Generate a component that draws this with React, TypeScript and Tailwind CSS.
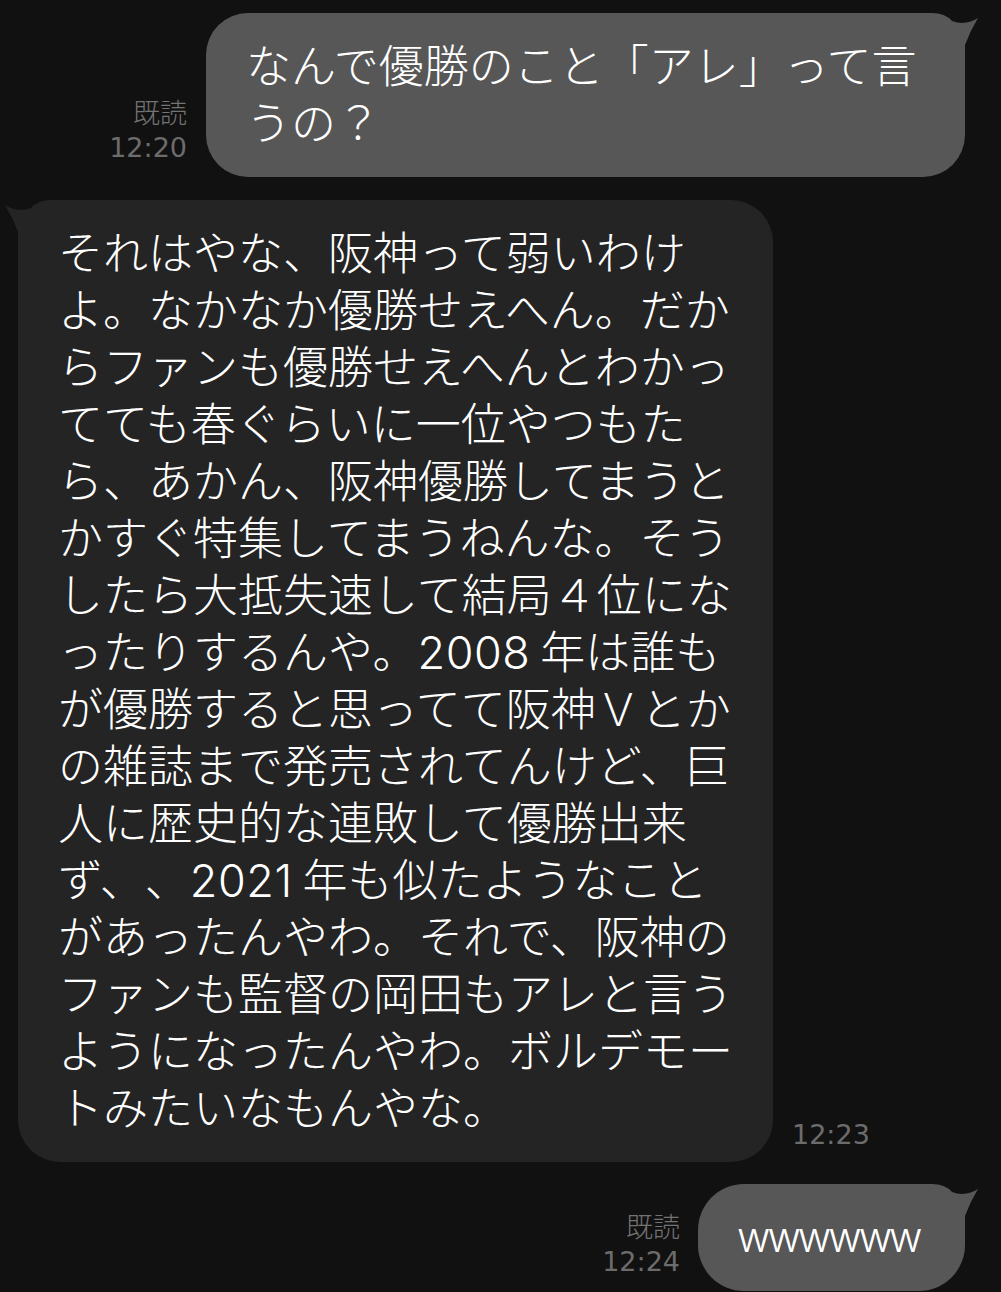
import React from "react";

const bubbleFont = {
  fontFamily: '"Inter", "Noto Sans CJK JP", sans-serif',
};

const Num = ({ children }: { children: string }) => (
  <span className="mr-[10px] tracking-[0.5px]">{children}</span>
);

const reply: React.ReactNode[] = [
  "それはやな、阪神って弱いわけ",
  "よ。なかなか優勝せえへん。だか",
  "らファンも優勝せえへんとわかっ",
  "てても春ぐらいに一位やつもた",
  "ら、あかん、阪神優勝してまうと",
  "かすぐ特集してまうねんな。そう",
  "したら大抵失速して結局４位にな",
  <>
    ったりするんや。<Num>2008</Num>年は誰も
  </>,
  "が優勝すると思ってて阪神Ｖとか",
  "の雑誌まで発売されてんけど、巨",
  "人に歴史的な連敗して優勝出来",
  <>
    ず、、<Num>2021</Num>年も似たようなこと
  </>,
  "があったんやわ。それで、阪神の",
  "ファンも監督の岡田もアレと言う",
  "ようになったんやわ。ボルデモー",
  "トみたいなもんやな。",
];

function Tail({ color, mirrored }: { color: string; mirrored?: boolean }) {
  return (
    <svg
      width="60"
      height="60"
      viewBox="0 0 60 60"
      className={
        mirrored
          ? "absolute top-0 left-[-15px] -scale-x-100"
          : "absolute top-0 right-[-15px]"
      }
    >
      <path
        d="M0 0 H12 Q25 0 32 8 Q45 13 58 5 Q50 18 45 32 V60 H0 Z"
        fill={color}
      />
    </svg>
  );
}

function Meta({ read, time, mb }: { read?: boolean; time: string; mb: string }) {
  return (
    <div className={`flex flex-col items-end ${mb}`}>
      {read && (
        <span
          className="text-[27px] leading-[36px] font-light text-[#737373]"
          style={{ fontFamily: '"Noto Sans CJK JP", sans-serif' }}
        >
          既読
        </span>
      )}
      <span
        className="text-[27px] leading-[36px] text-[#6c6c6c]"
        style={{ fontFamily: '"DejaVu Sans", sans-serif' }}
      >
        {time}
      </span>
    </div>
  );
}

export default function App() {
  return (
    <div className="h-[1292px] w-[1001px] overflow-hidden bg-[#111111] [text-spacing-trim:space-all]">
      {/* sent */}
      <div className="flex items-end justify-end pt-[13px] pr-[36px]">
        <div className="mr-[19px]">
          <Meta read time="12:20" mb="mb-[11px]" />
        </div>
        <div
          className="relative w-[759px] rounded-[42px] bg-[#575757] py-[25px] pl-[40px] text-[45px] leading-[57px] font-light text-white"
          style={bubbleFont}
        >
          <Tail color="#575757" />
          <div className="relative whitespace-nowrap">なんで優勝のこと「アレ」って言</div>
          <div className="relative whitespace-nowrap">うの？</div>
        </div>
      </div>

      {/* received */}
      <div className="mt-[23px] flex items-end pl-[18px]">
        <div
          className="relative w-[755px] rounded-[42px] bg-[#242424] py-[25px] pl-[40px] text-[45px] leading-[57px] font-light text-white"
          style={bubbleFont}
        >
          <Tail color="#242424" mirrored />
          {reply.map((line, i) => (
            <div key={i} className="relative whitespace-nowrap">
              {line}
            </div>
          ))}
        </div>
        <div className="ml-[19px]">
          <Meta time="12:23" mb="mb-[9px]" />
        </div>
      </div>

      {/* sent */}
      <div className="mt-[22px] flex items-end justify-end pr-[36px]">
        <div className="mr-[18px]">
          <Meta read time="12:24" mb="mb-[11px]" />
        </div>
        <div
          className="relative w-[267px] rounded-[46px] bg-[#575757] py-[25px] pl-[39px] text-[41px] leading-[57px] font-light tracking-[-3px] text-white"
          style={bubbleFont}
        >
          <Tail color="#575757" />
          <div className="relative whitespace-nowrap">wwwwww</div>
        </div>
      </div>
    </div>
  );
}
